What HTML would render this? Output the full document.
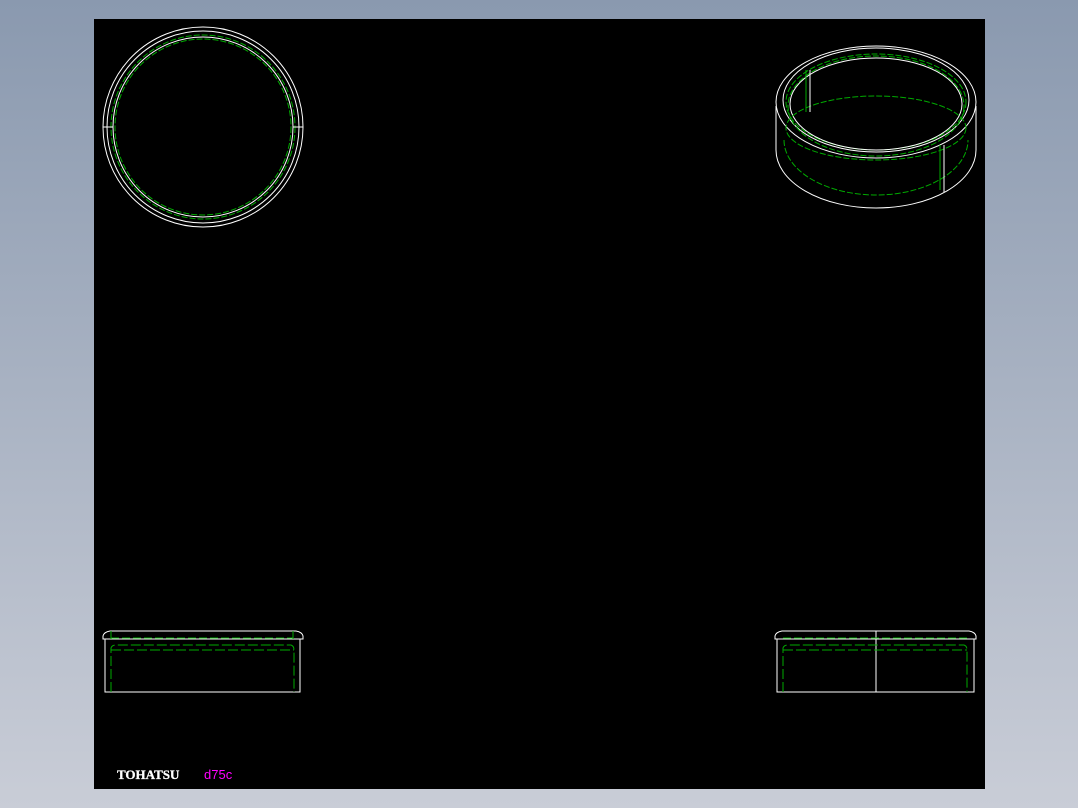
<!DOCTYPE html>
<html><head><style>
html,body{margin:0;padding:0;width:1078px;height:808px;overflow:hidden;background:linear-gradient(#8a99af,#c9cdd7);}
</style></head><body>
<svg width="1078" height="808" style="position:absolute;left:0;top:0">
<rect x="94" y="19" width="891" height="770" fill="#000"/>
<g fill="none" stroke-width="1">
<!-- top view circle -->
<circle cx="203" cy="127" r="100" stroke="#fff"/>
<circle cx="203" cy="127" r="96" stroke="#fff"/>
<circle cx="203" cy="127" r="92" stroke="#0a0" stroke-dasharray="6 2"/>
<circle cx="203" cy="127" r="90" stroke="#fff"/>
<circle cx="203" cy="127" r="88" stroke="#0a0" stroke-dasharray="6 2"/>
<line x1="103" y1="127" x2="113" y2="127" stroke="#fff"/>
<line x1="293" y1="127" x2="303" y2="127" stroke="#fff"/>
<!-- iso -->
<ellipse cx="876" cy="102" rx="100" ry="56" stroke="#fff"/>
<ellipse cx="876" cy="100" rx="93" ry="52" stroke="#fff"/>
<ellipse cx="876" cy="102" rx="90" ry="48" stroke="#0a0" stroke-dasharray="6 2"/>
<ellipse cx="876" cy="104" rx="86" ry="46" stroke="#fff"/>
<ellipse cx="876" cy="106" rx="88" ry="50" stroke="#0a0" stroke-dasharray="6 2"/>
<ellipse cx="876" cy="128" rx="90" ry="32" stroke="#0a0" stroke-dasharray="6 2"/>
<path d="M776 106 L776 150 A100 58 0 0 0 976 150 L976 106" stroke="#fff"/>
<path d="M784 140 A92 55 0 0 0 968 140" stroke="#0a0" stroke-dasharray="6 2"/>
<line x1="806" y1="70" x2="806" y2="112" stroke="#0a0"/>
<line x1="810" y1="70" x2="810" y2="112" stroke="#fff"/>
<line x1="940" y1="145" x2="940" y2="190" stroke="#0a0"/>
<line x1="944" y1="145" x2="944" y2="192" stroke="#fff"/>
<!-- left side view -->
<path d="M103 639 L103 636 Q104 632 110 631 L296 631 Q302 632 303 636 L303 639 Z" stroke="#fff"/>
<rect x="105" y="639" width="195" height="53" stroke="#fff"/>
<line x1="111" y1="631" x2="111" y2="639" stroke="#0a0"/>
<line x1="293" y1="631" x2="293" y2="639" stroke="#0a0"/>
<line x1="111" y1="638" x2="293" y2="638" stroke="#0a0" stroke-dasharray="8 3"/>
<path d="M111 692 L111 648 Q112 645 116 645 L291 645 Q294 646 294 650 L294 692" stroke="#0a0" stroke-dasharray="10 3"/>
<line x1="111" y1="650" x2="294" y2="650" stroke="#0a0" stroke-dasharray="10 3"/>
<!-- right side view -->
<path d="M775 639 L775 636 Q776 632 782 631 L969 631 Q975 632 976 636 L976 639 Z" stroke="#fff"/>
<rect x="777" y="639" width="197" height="53" stroke="#fff"/>
<line x1="876" y1="631" x2="876" y2="692" stroke="#fff"/>
<line x1="783" y1="638" x2="968" y2="638" stroke="#0a0" stroke-dasharray="8 3"/>
<path d="M783 692 L783 648 Q784 645 788 645 L964 645 Q967 646 967 650 L967 692" stroke="#0a0" stroke-dasharray="10 3"/>
<line x1="783" y1="650" x2="967" y2="650" stroke="#0a0" stroke-dasharray="10 3"/>
</g>
<text x="117" y="779" font-family="Liberation Serif,serif" font-weight="bold" font-size="13" fill="#fff" stroke="#fff" stroke-width="0.3">TOHATSU</text>
<text x="204" y="779" font-family="Liberation Sans,sans-serif" font-size="13" fill="#f0f">d75c</text>
</svg>
</body></html>
